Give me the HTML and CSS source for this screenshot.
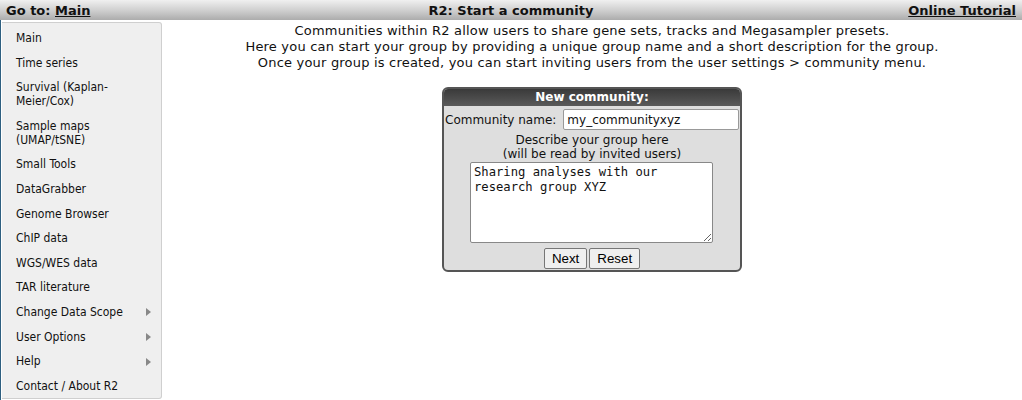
FILE: index.html
```html
<!DOCTYPE html>
<html>
<head>
<meta charset="utf-8">
<link rel="stylesheet" href="styles.css">
</head>
<body>
<div class="topbar">
  <div class="goto">Go to: <a href="#">Main</a></div>
  <div class="title">R2: Start a community</div>
  <div class="tutorial"><a href="#">Online Tutorial</a></div>
</div>
<div class="layout">
  <nav class="sidebar">
    <ul class="menu">
      <li>Main</li>
      <li>Time series</li>
      <li>Survival (Kaplan-<br>Meier/Cox)</li>
      <li>Sample maps<br>(UMAP/tSNE)</li>
      <li>Small Tools</li>
      <li>DataGrabber</li>
      <li>Genome Browser</li>
      <li>ChIP data</li>
      <li>WGS/WES data</li>
      <li>TAR literature</li>
      <li class="sub">Change Data Scope</li>
      <li class="sub">User Options</li>
      <li class="sub">Help</li>
      <li>Contact / About R2</li>
    </ul>
  </nav>
  <main class="content">
    <p class="intro">Communities within R2 allow users to share gene sets, tracks and Megasampler presets.<br>
    Here you can start your group by providing a unique group name and a short description for the group.<br>
    Once your group is created, you can start inviting users from the user settings &gt; community menu.</p>
    <form class="box">
      <div class="box-head">New community:</div>
      <div class="box-body">
        <div class="name-row">
          <label for="cname">Community name:</label>
          <input id="cname" class="name-input" type="text" value="my_communityxyz">
        </div>
        <div class="desc-label">Describe your group here<br>(will be read by invited users)</div>
        <textarea class="desc">Sharing analyses with our research group XYZ</textarea>
        <div class="buttons">
          <button type="button" class="btn">Next</button><button type="reset" class="btn">Reset</button>
        </div>
      </div>
    </form>
  </main>
</div>
</body>
</html>
```
FILE: styles.css
```css
html, body {
  margin: 0;
  padding: 0;
  background: #fff;
}
body {
  font-family: "DejaVu Sans", Verdana, sans-serif;
  font-size: 13px;
  color: #111;
  width: 1022px;
  height: 400px;
  overflow: hidden;
}
.topbar {
  height: 20px;
  background: linear-gradient(to bottom, #f0f0f0 0%, #cdcdcd 55%, #acacac 100%);
  display: flex;
  align-items: center;
  justify-content: space-between;
  padding: 0 6px;
  font-weight: bold;
  font-size: 13px;
  color: #111;
  position: relative;
}
.topbar a {
  color: #111;
  text-decoration: underline;
}
.title {
  position: absolute;
  left: 0;
  right: 0;
  text-align: center;
  pointer-events: none;
}
.layout {
  display: flex;
  align-items: flex-start;
  height: 380px;
  border-left: 1px solid #2e5f80;
}
.sidebar {
  width: 159px;
  margin-top: 2px;
  margin-left: 1px;
  height: 375px;
  background: #efefef;
  border: 1px solid #cfcfcf;
  border-left: none;
  border-radius: 0 3px 3px 0;
  box-sizing: content-box;
}
.menu {
  list-style: none;
  margin: 0;
  padding: 3px 0 0 0;
  font-family: "DejaVu Sans Condensed", "DejaVu Sans", sans-serif;
  font-size: 12px;
  line-height: 14px;
}
.menu li {
  padding: 5px 0 5.6px 14px;
  color: #111;
  position: relative;
}
.menu li.sub::after {
  content: "";
  position: absolute;
  right: 10px;
  top: 8.5px;
  border-left: 5px solid #888;
  border-top: 4.5px solid transparent;
  border-bottom: 4.5px solid transparent;
}
.content {
  flex: 1;
  text-align: center;
  padding-top: 3px;
}
.intro {
  margin: 0;
  line-height: 16px;
  font-size: 13px;
  letter-spacing: 0.2px;
}
.box {
  width: 296px;
  margin: 16px auto 0 auto;
  border: 2px solid #555;
  border-radius: 6px;
  background: #dedede;
  overflow: hidden;
  text-align: center;
  font-size: 12px;
}
.box-head {
  background: linear-gradient(to bottom, #3a3a3a, #5a5a5a);
  color: #fff;
  font-weight: bold;
  font-size: 12px;
  line-height: 17px;
  height: 17px;
}
.box-body {
  padding: 3px 0 1px 0;
}
.name-row {
  display: flex;
  align-items: center;
  gap: 7px;
  padding-left: 1px;
  padding-right: 1px;
}
.name-row label {
  font-size: 12px;
  white-space: nowrap;
}
.name-input {
  flex: 1;
  min-width: 0;
  height: 21px;
  box-sizing: border-box;
  border: 1px solid #999;
  border-radius: 2px;
  padding: 1px 3px;
  font-family: "DejaVu Sans", Verdana, sans-serif;
  font-size: 12px;
  color: #111;
  background: #fff;
}
.desc-label {
  padding: 3px 0 1px 0;
  line-height: 14px;
  font-size: 12px;
}
.desc {
  display: block;
  margin: 0 0 0 26px;
  width: 243px;
  height: 81px;
  box-sizing: border-box;
  border: 1px solid #888;
  border-radius: 2px;
  padding: 2px 3px;
  font-family: "DejaVu Sans Mono", "Liberation Mono", monospace;
  font-size: 12.2px;
  line-height: 15px;
  color: #111;
  resize: both;
  text-align: left;
}
.buttons {
  display: flex;
  justify-content: center;
  gap: 2px;
  margin-top: 5px;
}
.btn {
  font-family: "Liberation Sans", Arial, sans-serif;
  font-size: 13.33px;
  height: 21px;
  padding: 1px 7px;
  border: 1px solid #767676;
  border-radius: 2px;
  background: #efefef;
  color: #000;
}
```
